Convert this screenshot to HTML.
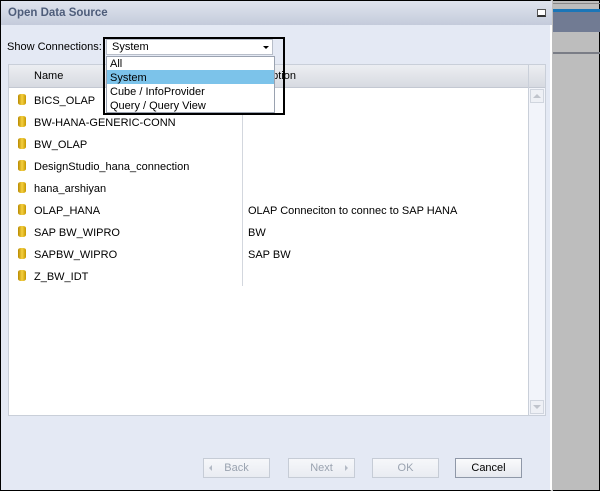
<!DOCTYPE html>
<html><head><style>
*{margin:0;padding:0;box-sizing:border-box}
body{width:600px;height:491px;overflow:hidden;background:#bdbdbd;font-family:"Liberation Sans",sans-serif;font-size:11px;color:#000;position:relative}
.abs{position:absolute}
#dlg{left:0;top:0;width:552px;height:491px;background:#e4e9f4;border:1px solid #000;border-right:2px solid #fff}
#title{left:0;top:0;width:551px;height:24px;background:linear-gradient(#dfe4ee,#c4cbdb);font-weight:bold;color:#4e5d7a;font-size:11.5px;padding:6px 0 0 7px}
.row{position:absolute;left:17px;height:14px;line-height:14px;white-space:nowrap}
.cyl{display:inline-block;width:8px;height:11px;background:linear-gradient(90deg,#b88a00,#f5d040 50%,#c79800);border-radius:3px/2px;vertical-align:-1px;margin-right:8px}
.btn{position:absolute;top:457px;width:67px;height:20px;border:1px solid #c6ccd6;background:linear-gradient(#f6f7fa,#e9ecf2);color:#9aa3b0;text-align:center;line-height:18px;font-size:11px}
</style></head><body>
<div class="abs" style="left:553px;top:0;width:47px;height:491px;background:#bdbdbd;border-top:1px solid #000;border-right:1px solid #000;border-bottom:1px solid #000"></div>
<div class="abs" style="left:553px;top:3px;width:47px;height:1px;background:#888"></div>
<div class="abs" style="left:553px;top:9px;width:47px;height:3px;background:#1b76b8"></div>
<div class="abs" style="left:553px;top:12px;width:47px;height:20px;background:#717b93"></div>
<div class="abs" style="left:553px;top:52px;width:47px;height:2px;background:#7a7d86"></div>
<div id="dlg" class="abs">
<div id="title" class="abs">Open Data Source</div>
<div class="abs" style="left:536px;top:8px;width:9px;height:8px;border:1px solid #555;border-bottom:2px solid #333;background:#fff"></div>
<div class="abs" style="left:6px;top:40px">Show Connections:</div>
<div class="abs" style="left:7px;top:63px;width:538px;height:352px;background:#fff;border:1px solid #c9cfd9"></div>
<div class="abs" style="left:8px;top:64px;width:536px;height:23px;background:linear-gradient(#eceef2,#d7dae1);border-bottom:1px solid #c3c8d2"></div>
<div class="abs" style="left:33px;top:69px">Name</div>
<div class="abs" style="left:240px;top:69px">Description</div>
<div class="abs" style="left:527px;top:64px;width:1px;height:350px;background:#c9cfd9"></div>
<div class="abs" style="left:528px;top:87px;width:16px;height:327px;background:#f2f4fa"></div>
<div class="abs" style="left:529px;top:88px;width:14px;height:14px;border:1px solid #d0d5de;background:#eef0f5"></div>
<div class="abs" style="left:532px;top:93px;width:0;height:0;border-left:4px solid transparent;border-right:4px solid transparent;border-bottom:4px solid #c0c4cc"></div>
<div class="abs" style="left:529px;top:399px;width:14px;height:14px;border:1px solid #d0d5de;background:#eef0f5"></div>
<div class="abs" style="left:532px;top:404px;width:0;height:0;border-left:4px solid transparent;border-right:4px solid transparent;border-top:4px solid #c0c4cc"></div>
<div class="abs" style="left:241px;top:87px;width:1px;height:198px;background:#d3d7de"></div>
<div class="row" style="top:93px"><span class="cyl"></span>BICS_OLAP</div>
<div class="row" style="top:115px"><span class="cyl"></span>BW-HANA-GENERIC-CONN</div>
<div class="row" style="top:137px"><span class="cyl"></span>BW_OLAP</div>
<div class="row" style="top:159px"><span class="cyl"></span>DesignStudio_hana_connection</div>
<div class="row" style="top:181px"><span class="cyl"></span>hana_arshiyan</div>
<div class="row" style="top:203px"><span class="cyl"></span>OLAP_HANA</div>
<div class="row" style="top:225px"><span class="cyl"></span>SAP BW_WIPRO</div>
<div class="row" style="top:247px"><span class="cyl"></span>SAPBW_WIPRO</div>
<div class="row" style="top:269px"><span class="cyl"></span>Z_BW_IDT</div>
<div class="row" style="left:247px;top:203px">OLAP Conneciton to connec to SAP HANA</div>
<div class="row" style="left:247px;top:225px">BW</div>
<div class="row" style="left:247px;top:247px">SAP BW</div>
<div class="abs" style="left:102px;top:36px;width:182px;height:78px;border:2px solid #000"></div>
<div class="abs" style="left:105px;top:38px;width:167px;height:16px;background:#fff;border:1px solid #b8bec9;padding-left:5px;line-height:14px">System</div>
<div class="abs" style="left:262px;top:45px;width:0;height:0;border-left:3px solid transparent;border-right:3px solid transparent;border-top:3px solid #000"></div>
<div class="abs" style="left:105px;top:55px;width:169px;height:57px;background:#fff;border:1px solid #9aa2b0"></div>
<div class="abs" style="left:109px;top:56px;line-height:14px">All</div>
<div class="abs" style="left:106px;top:69px;width:167px;height:14px;background:#7cc3ea"></div>
<div class="abs" style="left:109px;top:70px;line-height:14px">System</div>
<div class="abs" style="left:109px;top:84px;line-height:14px">Cube / InfoProvider</div>
<div class="abs" style="left:109px;top:98px;line-height:14px">Query / Query View</div>
<div class="btn" style="left:202px">Back<span class="abs" style="left:5px;top:6px;border-top:3px solid transparent;border-bottom:3px solid transparent;border-right:3px solid #b3bac5"></span></div>
<div class="btn" style="left:287px">Next<span class="abs" style="left:56px;top:6px;border-top:3px solid transparent;border-bottom:3px solid transparent;border-left:3px solid #b3bac5"></span></div>
<div class="btn" style="left:371px">OK</div>
<div class="btn" style="left:454px;border-color:#8f98a8;color:#000;background:linear-gradient(#fafbfc,#e6e9ef)">Cancel</div>
</div>
</body></html>
